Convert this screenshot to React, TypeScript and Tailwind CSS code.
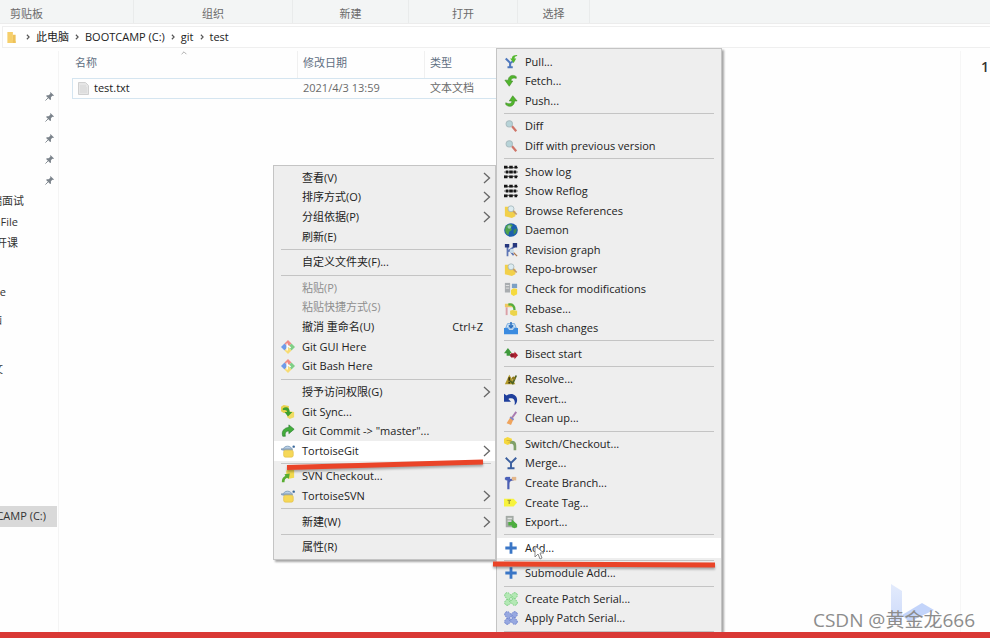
import React from 'react';

interface MenuEntry {
  label: string;
  icon?: string;
  shortcut?: string;
  submenu?: boolean;
  disabled?: boolean;
  active?: boolean;
}

interface SidebarRow {
  label?: string;
  width?: string;
  pinned?: boolean;
  selected?: boolean;
  gap?: boolean;
}

// null is a separator
const contextMenu: (MenuEntry | null)[] = [
  { label: '查看(V)', submenu: true },
  { label: '排序方式(O)', submenu: true },
  { label: '分组依据(P)', submenu: true },
  { label: '刷新(E)' },
  null,
  { label: '自定义文件夹(F)...' },
  null,
  { label: '粘贴(P)', disabled: true },
  { label: '粘贴快捷方式(S)', disabled: true },
  { label: '撤消 重命名(U)', shortcut: 'Ctrl+Z' },
  { label: 'Git GUI Here', icon: 'git' },
  { label: 'Git Bash Here', icon: 'git' },
  null,
  { label: '授予访问权限(G)', submenu: true },
  { label: 'Git Sync...', icon: 'sync' },
  { label: 'Git Commit -> "master"...', icon: 'commit' },
  { label: 'TortoiseGit', icon: 'tortoise', submenu: true, active: true },
  null,
  { label: 'SVN Checkout...', icon: 'checkout' },
  { label: 'TortoiseSVN', icon: 'tortoise', submenu: true },
  null,
  { label: '新建(W)', submenu: true },
  null,
  { label: '属性(R)' },
];

const tortoiseMenu: (MenuEntry | null)[] = [
  { label: 'Pull...', icon: 'pull' },
  { label: 'Fetch...', icon: 'fetch' },
  { label: 'Push...', icon: 'push' },
  null,
  { label: 'Diff', icon: 'diff' },
  { label: 'Diff with previous version', icon: 'diff' },
  null,
  { label: 'Show log', icon: 'log' },
  { label: 'Show Reflog', icon: 'log' },
  { label: 'Browse References', icon: 'browse' },
  { label: 'Daemon', icon: 'globe' },
  { label: 'Revision graph', icon: 'graph' },
  { label: 'Repo-browser', icon: 'browse' },
  { label: 'Check for modifications', icon: 'check' },
  { label: 'Rebase...', icon: 'rebase' },
  { label: 'Stash changes', icon: 'stash' },
  null,
  { label: 'Bisect start', icon: 'bisect' },
  null,
  { label: 'Resolve...', icon: 'resolve' },
  { label: 'Revert...', icon: 'revert' },
  { label: 'Clean up...', icon: 'clean' },
  null,
  { label: 'Switch/Checkout...', icon: 'switch' },
  { label: 'Merge...', icon: 'merge' },
  { label: 'Create Branch...', icon: 'branch' },
  { label: 'Create Tag...', icon: 'tag' },
  { label: 'Export...', icon: 'export' },
  null,
  { label: 'Add...', icon: 'plus', active: true },
  null,
  { label: 'Submodule Add...', icon: 'plus' },
  null,
  { label: 'Create Patch Serial...', icon: 'patchGreen' },
  { label: 'Apply Patch Serial...', icon: 'patchBlue' },
  null,
];

const sidebarRows: SidebarRow[] = [
  {},
  { pinned: true },
  { pinned: true },
  { pinned: true },
  { pinned: true },
  { pinned: true },
  { label: '端面试', width: 'w-6' },
  { label: 'nFile', width: 'w-[18px]' },
  { label: '开课', width: 'w-[18px]' },
  {},
  { label: 'e', width: 'w-[6px]', gap: true },
  { label: '脑', width: 'w-[2px]', gap: true },
  {},
  { label: '文', width: 'w-[3px]', gap: true },
  {},
  {},
  {},
  {},
  {},
  {},
  { label: 'CAMP (C:)', width: 'w-[46px]', selected: true },
];

const ribbonGroups = [
  { label: '组织', width: 'w-[159px]' },
  { label: '新建', width: 'w-[116px]' },
  { label: '打开', width: 'w-[109px]' },
  { label: '选择', width: 'w-[72px]' },
];

const patch = (light: string, dark: string) => (
  <>
    <g fill={light} stroke={dark} strokeWidth="1" strokeDasharray="2 1">
      <rect x="-3" y="-9" width="6" height="18" rx="3" transform="translate(8 8) rotate(45)" />
      <rect x="-3" y="-9" width="6" height="18" rx="3" transform="translate(8 8) rotate(-45)" />
    </g>
    <circle cx="8" cy="8" r="1.6" fill="#fff" stroke={dark} />
  </>
);

const icons: Record<string, React.ReactNode> = {
  git: (
    <>
      <path d="M8 0l4 4-4 4-4-4z" fill="#f08a85" />
      <path d="M4 4l4 4-4 4-4-4z" fill="#6f9be8" />
      <path d="M12 4l4 4-4 4-4-4z" fill="#7fcf86" />
      <path d="M8 8l4 4-4 4-4-4z" fill="#f7dc74" />
      <path d="M7 4v8M7 6l4 3" stroke="#fff" strokeWidth="1.6" fill="none" />
    </>
  ),
  sync: (
    <>
      <path d="M0 2l3-2 6 1v7l-6 1-3-2z" fill="#e9d24e" />
      <path d="M7 9l3-2 5 1v6l-5 2-3-2z" fill="#f0dc62" />
      <path d="M2 4c4-3 8-1 8 4h3l-5 5-4-5h3c0-2-2-3-5-2z" fill="#3fa02d" />
    </>
  ),
  commit: (
    <path d="M2 14C0 8 4 4 9 4V1l6 5-6 5V8c-3 0-5 2-4 6z" fill="#43ad3b" stroke="#237a27" strokeWidth=".7" />
  ),
  tortoise: (
    <>
      <path d="M2 7c1-6 10-6 11 0z" fill="#b9d0e6" stroke="#7d9bb8" />
      <path d="M0 6h13" stroke="#8aa3bd" strokeWidth="2" />
      <rect x="3" y="7" width="11" height="8" rx="2" fill="#f6d858" stroke="#e0bd45" strokeWidth=".7" />
      <circle cx="14.5" cy="3" r="1.4" fill="#37669a" />
    </>
  ),
  checkout: (
    <>
      <path d="M6 2l3-2 6 1v9l-6 1-3-1z" fill="#f1d94d" />
      <path d="M1 15c0-5 2-6 4-7L4 6l6-1-1 6-2-1c-2 1-3 2-3 5z" fill="#58ad32" />
    </>
  ),
  pull: (
    <>
      <path d="M2 4l5 5v5M8 9l4-4M4 14h6" stroke="#4f78bd" strokeWidth="2.4" fill="none" />
      <path d="M15 0C11 0 9 1 9 4H7l4 5 3-5h-2c0-2 1-3 3-3z" fill="#55b82f" />
    </>
  ),
  fetch: <path d="M14 3C10 0 5 2 5 7H1l5 7 4-6H8c0-3 2-4 6-3z" fill="#51b52d" stroke="#39851f" strokeWidth=".6" />,
  push: <path d="M2 12c4 4 10 2 10-4h3L10 2 6 8h3c0 3-3 4-7 2z" fill="#51b52d" stroke="#39851f" strokeWidth=".6" />,
  diff: (
    <>
      <path d="M9 8l5 6" stroke="#cf7568" strokeWidth="2.5" />
      <circle cx="6" cy="5.5" r="3.6" fill="#b7d3d8" stroke="#a9bcc0" strokeWidth="1.2" />
    </>
  ),
  log: (
    <>
      <path d="M0 3h16M0 8h16M0 13h16" stroke="#6d6d6d" strokeWidth="1.4" />
      <path d="M0 2.5h4M6 2.5h4M12 2.5h3M2 8h3M6 8h4M11 8h3M0 13.500h4M6 13.500h4M12 13.500h3" stroke="#161616" strokeWidth="3.200" />
    </>
  ),
  browse: (
    <>
      <path d="M1 3h5l1 3 6 2v6l-4 2-8-2z" fill="#f2d04a" />
      <circle cx="8" cy="5.5" r="3.4" fill="#dcebf0" stroke="#a8b9bd" />
      <path d="M10.500 8l4 4" stroke="#c39a6b" strokeWidth="2" />
    </>
  ),
  globe: (
    <>
      <circle cx="8" cy="8" r="7.8" fill="#1d5fae" />
      <path d="M3 2.500c3-2 6-1 7 0L8 5l1 3-3 2-1 4C1 12 0 7 3 2.500z" fill="#4fa24c" />
      <path d="M11 8l3-2c1 3 0 6-3 7z" fill="#3f8c55" />
      <circle cx="6" cy="4.500" r="2" fill="#b8e0dc" opacity=".7" />
    </>
  ),
  graph: (
    <>
      <path d="M4 3v12M4 10l8-6M6 8l5 6" stroke="#5d75b5" strokeWidth="2" fill="none" />
      <path d="M1 1h5v4H1zM10 0h5v5h-5z" fill="#27387e" />
      <circle cx="9" cy="9" r="2.500" fill="#c8dce8" />
      <path d="M11 11l4 4" stroke="#b07a50" strokeWidth="1.5" />
    </>
  ),
  check: (
    <>
      <path d="M1 1h6v11H1z" fill="#a9adb0" />
      <path d="M2 4h4M2 7h4" stroke="#e6e6e6" />
      <path d="M9 2h6v5H9z" fill="#7b9fc4" />
      <path d="M8 9l3-2 4 1v6l-4 2-3-2z" fill="#f5da3f" />
    </>
  ),
  rebase: (
    <>
      <path d="M1 2h9v4H1z" fill="#efc85f" />
      <path d="M3 6v9" stroke="#dba0a6" strokeWidth="2.200" />
      <path d="M5 3c5-1 7 2 7 6" stroke="#57ad3d" strokeWidth="2.600" fill="none" />
      <path d="M7 10l3-1 5 1v5l-4 1-4-2z" fill="#ecd44b" />
    </>
  ),
  stash: (
    <>
      <path d="M2 8l2-5h8l2 5z" fill="#d3e7f8" stroke="#6aa2dd" />
      <path d="M0 8h4l2 2h4l2-2h4v7H0z" fill="#3b8be0" />
      <path d="M8 1v6M5.500 5L8 7.500 10.500 5" stroke="#2f72bf" strokeWidth="1.800" fill="none" />
    </>
  ),
  bisect: (
    <>
      <path d="M4.500 1L0 7h3v3h4V7h2z" fill="#3f9a3c" />
      <path d="M8 7h4V5l4 4.500L12 14v-2H8z" fill="#b01f30" />
      <path d="M7 8h4v3H7z" fill="#861c2b" />
    </>
  ),
  resolve: (
    <>
      <path d="M6 3L1 14h12z" fill="#b29a2b" />
      <path d="M6 6v4M6 11v2" stroke="#3b3510" strokeWidth="2" />
      <path d="M7 10l3 3 4-9" stroke="#4f6424" strokeWidth="2" fill="none" />
      <circle cx="11" cy="7" r="2" fill="#8f7a1d" />
    </>
  ),
  revert: <path d="M0 2l3 2c5-4 12-1 12 5 0 2-1 5-3 6 1-4 0-8-4-8-1 0-2 0-3 1l3 3H0z" fill="#1f3f9c" />,
  clean: (
    <>
      <path d="M14 1L9 8" stroke="#a97ab0" strokeWidth="2.200" />
      <path d="M8 6l3 3-3 7-5-2z" fill="#f0a45c" />
      <path d="M7 7l4 3" stroke="#7c83cf" strokeWidth="2" />
    </>
  ),
  switch: (
    <>
      <path d="M0 2l4-2 5 2v5L4 9 0 7z" fill="#f5d83e" />
      <path d="M7 5c5-2 7 1 7 5v5h-3v-4c0-2-1-4-4-3z" fill="#7fa06a" />
      <path d="M3 4h5l-3 3" stroke="#c9ac38" fill="none" />
    </>
  ),
  merge: <path d="M2 2l6 6 6-6M8 8v5M4 14h8" stroke="#3b5f9f" strokeWidth="2.200" fill="none" />,
  branch: (
    <>
      <path d="M5 3v12M5 9c0-4 2-5 6-5M1 3h5" stroke="#4c5fb3" strokeWidth="2.500" fill="none" />
      <path d="M2 1h5v4H2z" fill="#4a60b9" />
      <path d="M9 1h5v4H9z" fill="#e2b68a" />
    </>
  ),
  tag: (
    <>
      <path d="M0 3h11l4 4.500-4 4.500H0z" fill="#f7f33c" />
      <path d="M4 5h4M6 5v4" stroke="#a09b38" strokeWidth="1.500" />
    </>
  ),
  export: (
    <>
      <path d="M2 1h9v13H2z" fill="#a3aaa5" />
      <path d="M4 4h5M4 7h4" stroke="#dfe2e0" strokeWidth="1.500" />
      <path d="M5 8h4V5l6 5.500V14l-3 1-3-1v-2H5z" fill="#4dad3f" />
    </>
  ),
  plus: <path d="M8 1.500v13M1.500 8h13" stroke="#3a76c6" strokeWidth="3.200" />,
  patchGreen: patch('#b4e8b5', '#74cb7a'),
  patchBlue: patch('#97a8e0', '#6b80cb'),
};

const Separator: React.FC<{ className: string }> = ({ className }) => (
  <div role="separator" className={`ml-[7px] flex h-[6px] shrink-0 flex-col justify-center ${className}`}>
    <div className="border-t border-[#c4c4c4]" />
  </div>
);

interface MenuProps {
  entries: (MenuEntry | null)[];
  label: string;
  className: string;
  separatorClass: string;
}

const Menu: React.FC<MenuProps> = ({ entries, label, className, separatorClass }) => (
  <div
    role="menu"
    aria-label={label}
    className={`absolute flex flex-col border border-[#c4c4c4] bg-[#eeeeee] shadow-[2px_2px_2px_rgba(0,0,0,0.35)] ${className}`}
  >
    {entries.map((entry, i) =>
      entry ? (
        <button
          key={i}
          type="button"
          role="menuitem"
          disabled={entry.disabled}
          className={`flex min-h-0 flex-1 items-center whitespace-nowrap pl-[7px] pr-1 text-left leading-4 ${
            entry.active ? 'bg-white' : ''
          } ${entry.disabled ? 'text-[#8f8f8f]' : 'text-[#222]'}`}
        >
          <span className="mr-[7px] h-[14px] w-[14px] shrink-0">
            {entry.icon && (
              <svg viewBox="0 0 16 16" className="h-[14px] w-[14px]" aria-hidden="true">
                {icons[entry.icon]}
              </svg>
            )}
          </span>
          <span className="flex-1">{entry.label}</span>
          {entry.shortcut && <span className="mr-2">{entry.shortcut}</span>}
          {entry.submenu && (
            <svg viewBox="0 0 8 12" className="h-3 w-2" fill="none" stroke="#666" strokeWidth="1.3" aria-hidden="true">
              <path d="M1 1l5.500 5L1 11" />
            </svg>
          )}
        </button>
      ) : (
        <Separator key={i} className={separatorClass} />
      )
    )}
  </div>
);

const Chevron: React.FC = () => (
  <svg viewBox="0 0 5 8" className="mx-[6px] h-[6px] w-1 shrink-0" fill="none" stroke="#555" strokeWidth="1.500" aria-hidden="true">
    <path d="M1 1l3 3-3 3" />
  </svg>
);

const PinIcon: React.FC = () => (
  <svg viewBox="0 0 10 10" className="ml-[45px] h-[9px] w-[9px]" aria-hidden="true">
    <path d="M6 0l4 4-1 .5-1-.3-1.500 2 .2 2-1 .8-4.500-4.500.8-1 2 .2L6 2l-.3-1z" fill="#7b838b" />
    <path d="M3.500 6.500L.5 9.500" stroke="#7b838b" />
  </svg>
);

const App: React.FC = () => {
  return (
    <div className="relative flex h-screen flex-col overflow-hidden bg-[#fefefe] font-['Open_Sans','Noto_Sans_CJK_SC',sans-serif] text-[11px] text-[#333]">
      {/* Ribbon group captions */}
      <div className="flex h-6 shrink-0 border-b border-[#ececec] bg-[#f3f5f5] text-[#6b6b6b]">
        <div className="w-[134px] border-r border-[#e9ebeb] pl-[10px] pt-1 leading-5">剪贴板</div>
        {ribbonGroups.map((group) => (
          <div key={group.label} className={`border-r border-[#e9ebeb] pt-1 text-center leading-5 ${group.width}`}>
            {group.label}
          </div>
        ))}
      </div>

      {/* Address bar */}
      <nav className="ml-[2px] mt-[2px] flex h-[22px] shrink-0 items-center border border-r-0 border-[#efefef] bg-white pl-1 text-[#222]">
        <svg viewBox="0 0 9 12" className="mr-1 h-[11px] w-[9px]" aria-hidden="true">
          <path d="M0 0h6v9l3 1v2H0z" fill="#f6cf6b" />
          <path d="M6 3h3v9H6z" fill="#eec25a" />
        </svg>
        <Chevron />
        <a href="#pc">此电脑</a>
        <Chevron />
        <a href="#c">BOOTCAMP (C:)</a>
        <Chevron />
        <a href="#git">git</a>
        <Chevron />
        <a href="#test">test</a>
      </nav>

      <div className="flex min-h-0 flex-1 pt-[3px]">
        {/* Navigation pane */}
        <aside className="w-[59px] shrink-0 border-r border-[#f4f4f4] pt-[14px]">
          {sidebarRows.map((row, i) => (
            <div
              key={i}
              className={`mr-[1px] flex h-[21px] items-center ${row.gap ? 'mt-[7px]' : ''} ${row.selected ? 'bg-[#d9d9d9]' : ''}`}
            >
              {row.pinned && <PinIcon />}
              {row.label && (
                <span className={`flex justify-end overflow-hidden whitespace-nowrap ${row.width}`}>{row.label}</span>
              )}
            </div>
          ))}
        </aside>

        {/* File list */}
        <main className="flex-1 pl-[13px] pr-[260px]">
          <table className="w-full table-fixed border-separate border-spacing-0 text-left">
            <thead className="text-[#5f6f82]">
              <tr className="h-[27px]">
                <th className="relative w-[226px] border-r border-[#f0f0f0] pb-[2px] pl-[3px] font-normal">
                  名称
                  <svg viewBox="0 0 8 5" className="absolute left-[108px] top-0 h-1 w-2" fill="none" stroke="#999" aria-hidden="true">
                    <path d="M1 4l3-3 3 3" />
                  </svg>
                </th>
                <th className="w-[127px] border-r border-[#f0f0f0] pb-[2px] pl-[5px] font-normal">修改日期</th>
                <th className="pb-[2px] pl-[5px] font-normal">类型</th>
              </tr>
            </thead>
            <tbody>
              <tr className="h-[21px] text-[#6a6a6a]">
                <td className="border-y border-l border-[#d5e5f0] pl-[5px] text-[#222]">
                  <div className="flex items-center">
                    <svg viewBox="0 0 11 13" className="mr-[5px] h-[13px] w-[11px]" aria-hidden="true">
                      <path d="M.5.5h7l3 3v9H.5z" fill="#e6e6e6" stroke="#d0d0d0" />
                      <path d="M2 4h6M2 6h7M2 8h7M2 10h7" stroke="#d6d6d6" />
                    </svg>
                    test.txt
                  </div>
                </td>
                <td className="border-y border-[#d5e5f0] pl-[5px]">2021/4/3 13:59</td>
                <td className="border-y border-[#d5e5f0] pl-[5px]">文本文档</td>
              </tr>
            </tbody>
          </table>
        </main>

        {/* Details pane */}
        <aside className="w-[30px] shrink-0 border-l border-[#f6f6f6] pl-5 pt-[6px] text-sm font-semibold">1</aside>
      </div>

      <Menu
        entries={contextMenu}
        label="Context menu"
        className="bottom-[78px] left-[273px] top-[165px] w-[223px] py-[2px]"
        separatorClass="mr-1"
      />
      <Menu
        entries={tortoiseMenu}
        label="TortoiseGit"
        className="bottom-[3px] left-[496px] top-12 w-[226px] pt-[3px]"
        separatorClass="mr-[7px]"
      />

      {/* Mouse pointer over Add... */}
      <svg viewBox="0 0 12 16" className="absolute left-[533px] top-[545px] h-4 w-3" aria-hidden="true">
        <path d="M2 1v11l3-3 2 5 2-1-2-5h4z" fill="#fff" stroke="#888" />
      </svg>

      {/* Red strokes under the two chosen entries */}
      <svg viewBox="0 0 440 120" className="absolute left-[280px] top-[452px] h-[120px] w-[440px] drop-shadow-[0_2px_1px_rgba(0,0,0,0.3)]" aria-hidden="true">
        <path d="M7 15.500L203 10M213 112L435 113" stroke="#ea4428" strokeWidth="5" fill="none" />
      </svg>

      {/* Watermark */}
      <svg viewBox="0 0 46 40" className="absolute bottom-[15px] left-[890px] h-10 w-[46px]" aria-hidden="true">
        <defs>
          <linearGradient id="logoFade" x1="0" y1="0" x2="0" y2="1">
            <stop offset="0" stopColor="#e3ebfc" />
            <stop offset="1" stopColor="#cddafa" />
          </linearGradient>
        </defs>
        <path d="M1 1l11 7v29L1 39z" fill="url(#logoFade)" />
        <path d="M12 32l20-12 12 7-25 12z" fill="#c3d4fa" />
      </svg>
      <div className="absolute bottom-[6px] right-[15px] text-[19px] leading-6 text-[#8c8c8c]">CSDN @黄金龙666</div>
      <div className="absolute inset-x-0 bottom-0 h-[6px] bg-[#d93835]" />
    </div>
  );
};

export default App;
